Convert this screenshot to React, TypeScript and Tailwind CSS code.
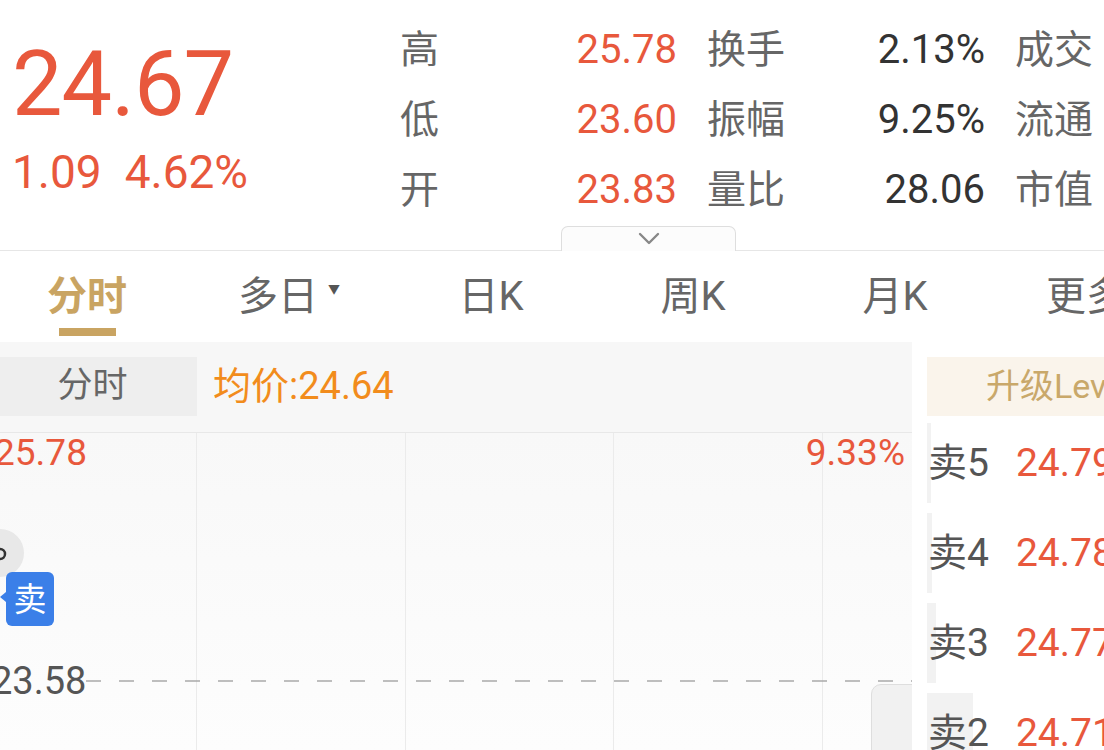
import React from "react";

const RED = "text-[#e8583c]";

function StatRow({ a, av, b, bv, c }: { a: string; av: string; b: string; bv: string; c: string }) {
  return (
    <div className="flex h-[70px] items-center leading-[70px] whitespace-nowrap">
      <div className="w-[120px] text-[39px] text-[#666]">{a}</div>
      <div className={`w-[157px] text-right text-[40px] ${RED}`}>{av}</div>
      <div className="w-[151px] pl-[30px] text-[39px] text-[#666]">{b}</div>
      <div className="w-[157px] text-right text-[40px] text-[#333]">{bv}</div>
      <div className="pl-[30px] text-[39px] text-[#666]">{c}</div>
    </div>
  );
}

function Tab({ label, active, arrow }: { label: string; active?: boolean; arrow?: boolean }) {
  return (
    <div className="flex w-[202px] shrink-0 flex-col items-center pt-[23px]">
      <div
        className={`flex h-[46px] items-center whitespace-nowrap text-[40px] leading-[46px] ${
          active ? "font-bold text-[#c9a462]" : "text-[#666]"
        }`}
      >
        {label}
        {arrow && <span className="ml-[10px] mb-[14px] text-[12px] text-[#555]">▼</span>}
      </div>
      {active && <div className="mt-[8px] h-[8px] w-[57px] bg-[#c9a462]" />}
    </div>
  );
}

function BookRow({ label, price, bar }: { label: string; price: string; bar: number }) {
  return (
    <div className="relative flex h-[80px] items-center whitespace-nowrap">
      <div className="absolute left-0 top-0 h-full bg-[#f2f2f2]" style={{ width: bar }} />
      <div className="relative pl-[1px] text-[39px] text-[#555] leading-none">{label}</div>
      <div className={`relative ml-[27px] text-[39px] leading-none ${RED}`}>{price}</div>
    </div>
  );
}

export default function App() {
  return (
    <div
      className="relative h-[750px] w-[1104px] overflow-hidden bg-white"
      style={{ fontFamily: 'Roboto, "Noto Sans CJK SC", sans-serif' }}
    >
      {/* Top quote section */}
      <div className="relative flex h-[251px] border-b border-[#e6e6e6]">
        <div className="w-[400px] shrink-0 pl-[12px] pt-[40px]">
          <div className={`text-[90px] leading-none tracking-[-1px] ${RED}`}>24.67</div>
          <div className={`mt-[19px] flex gap-[23px] text-[46px] leading-none ${RED}`}>
            <span>1.09</span>
            <span>4.62%</span>
          </div>
        </div>
        <div className="pt-[15px]">
          <StatRow a="高" av="25.78" b="换手" bv="2.13%" c="成交" />
          <StatRow a="低" av="23.60" b="振幅" bv="9.25%" c="流通" />
          <StatRow a="开" av="23.83" b="量比" bv="28.06" c="市值" />
        </div>
        <div className="absolute left-[561px] top-[226px] flex h-[25px] w-[175px] justify-center rounded-t-[7px] border border-b-0 border-[#dedede] bg-[#fcfcfc] pt-[5px]">
          <svg width="24" height="14" viewBox="0 0 24 14">
            <path d="M3 2 L12 11 L21 2" fill="none" stroke="#888" strokeWidth="2.4" strokeLinecap="round" strokeLinejoin="round" />
          </svg>
        </div>
      </div>

      {/* Tabs */}
      <div className="-ml-[14px] flex h-[91px]">
        <Tab label="分时" active />
        <Tab label="多日" arrow />
        <Tab label="日K" />
        <Tab label="周K" />
        <Tab label="月K" />
        <Tab label="更多" arrow />
      </div>

      {/* Chart + order book */}
      <div className="flex h-[408px]">
        <div className="relative w-[912px] shrink-0 overflow-hidden">
          <div className="flex h-[91px] items-start border-b border-[#e8e8e8] bg-[#f7f7f7] pt-[15px]">
            <div className="flex h-[59px] w-[197px] items-center justify-center pr-[12px] bg-[#eeeeee] text-[35px] text-[#666]">
              分时
            </div>
            <div className="ml-[16px] flex h-[59px] items-center text-[38px] text-[#f28c1c]">均价:24.64</div>
          </div>
          <div className="flex h-[317px] bg-gradient-to-b from-[#f8f8f8] to-[#fdfdfd]">
            <div className="w-[197px] border-r border-[#ebebeb]" />
            <div className="w-[209px] border-r border-[#ebebeb]" />
            <div className="w-[208px] border-r border-[#ebebeb]" />
            <div className="w-[209px] border-r border-[#ebebeb]" />
            <div className="flex-1" />
          </div>

          {/* chart overlays */}
          <div className={`absolute left-[-6px] text-[37px] leading-[46px] ${RED}`} style={{ top: 88 }}>
            25.78
          </div>
          <div className={`absolute right-[7px] text-[37px] leading-[46px] ${RED}`} style={{ top: 88 }}>
            9.33%
          </div>
          <div className="absolute left-[-24px] h-[48px] w-[48px] rounded-full bg-[#e8e8e8]" style={{ top: 187 }}>
            <svg className="absolute left-0 top-0" width="48" height="48" viewBox="0 0 48 48">
              <circle cx="24" cy="25" r="5" fill="none" stroke="#333" strokeWidth="2.5" />
            </svg>
          </div>
          <div
            className="absolute left-[6px] flex h-[54px] w-[48px] items-center justify-center rounded-[6px] bg-[#3b7fe8] text-[33px] leading-none text-white"
            style={{ top: 230 }}
          >
            卖
          </div>
          <div
            className="absolute left-[0px] h-0 w-0 border-y-[5px] border-r-[6px] border-y-transparent border-r-[#3b7fe8]"
            style={{ top: 250 }}
          />
          <div className="absolute left-[-9px] text-[38px] leading-[46px] text-[#555]" style={{ top: 316 }}>
            23.58
          </div>
          <svg className="absolute left-[86px]" style={{ top: 338 }} width="826" height="2" viewBox="0 0 826 2">
            <line x1="0" y1="1" x2="826" y2="1" stroke="#a9a9a9" strokeWidth="1.5" strokeDasharray="15 18" />
          </svg>
          <div
            className="absolute left-[871px] h-[80px] w-[60px] rounded-tl-[10px] border border-[#dedede] bg-[#f1f1f1]"
            style={{ top: 342 }}
          />
        </div>

        <div className="ml-[15px] flex-1 overflow-hidden pt-[15px]">
          <div className="flex h-[59px] items-center whitespace-nowrap bg-[#faf4eb] pl-[59px] text-[34px] text-[#c9a86a]">
            升级Level-2
          </div>
          <div className="mt-[7px] flex flex-col gap-[10px]">
            <BookRow label="卖5" price="24.79" bar={4} />
            <BookRow label="卖4" price="24.78" bar={5} />
            <BookRow label="卖3" price="24.77" bar={9} />
            <BookRow label="卖2" price="24.71" bar={46} />
          </div>
        </div>
      </div>
    </div>
  );
}
